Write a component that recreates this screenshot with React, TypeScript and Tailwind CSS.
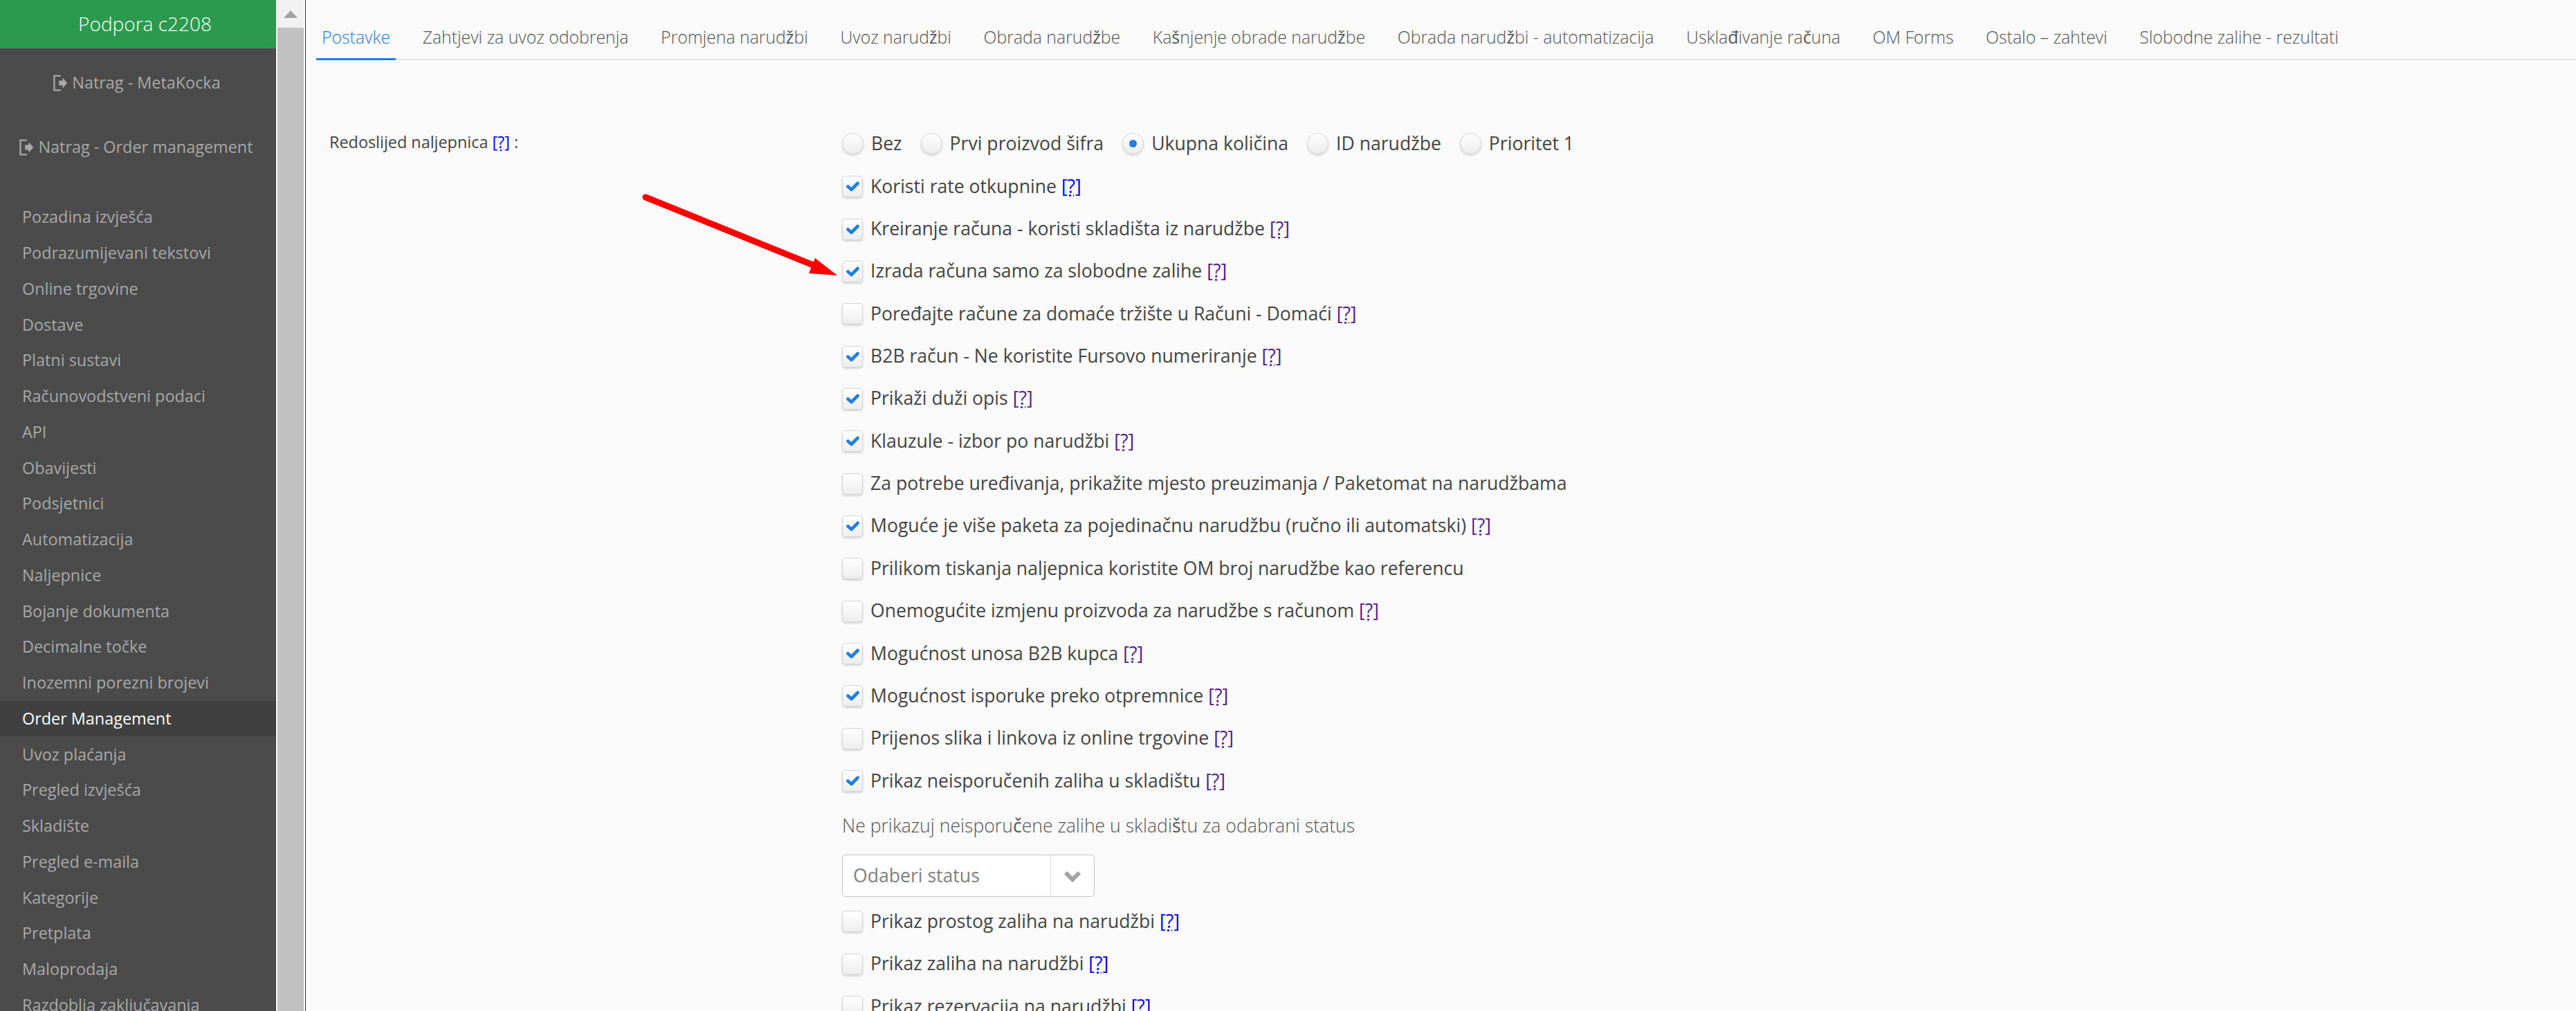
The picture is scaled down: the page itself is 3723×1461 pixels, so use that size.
import React from 'react';

const menu = [
  'Pozadina izvješća', 'Podrazumijevani tekstovi', 'Online trgovine', 'Dostave', 'Platni sustavi',
  'Računovodstveni podaci', 'API', 'Obavijesti', 'Podsjetnici', 'Automatizacija', 'Naljepnice',
  'Bojanje dokumenta', 'Decimalne točke', 'Inozemni porezni brojevi', 'Order Management', 'Uvoz plaćanja',
  'Pregled izvješća', 'Skladište', 'Pregled e-maila', 'Kategorije', 'Pretplata', 'Maloprodaja', 'Razdoblja zaključavanja',
];

const tabs = [
  'Postavke', 'Zahtjevi za uvoz odobrenja', 'Promjena narudžbi', 'Uvoz narudžbi', 'Obrada narudžbe',
  'Kašnjenje obrade narudžbe', 'Obrada narudžbi - automatizacija', 'Usklađivanje računa', 'OM Forms',
  'Ostalo – zahtevi', 'Slobodne zalihe - rezultati',
];

type Row = { label: string; checked: boolean; help?: 'blue' | 'purple' };

const rowsTop: Row[] = [
  { label: 'Koristi rate otkupnine', checked: true, help: 'blue' },
  { label: 'Kreiranje računa - koristi skladišta iz narudžbe', checked: true, help: 'purple' },
  { label: 'Izrada računa samo za slobodne zalihe', checked: true, help: 'purple' },
  { label: 'Poređajte račune za domaće tržište u Računi - Domaći', checked: false, help: 'purple' },
  { label: 'B2B račun - Ne koristite Fursovo numeriranje', checked: true, help: 'purple' },
  { label: 'Prikaži duži opis', checked: true, help: 'purple' },
  { label: 'Klauzule - izbor po narudžbi', checked: true, help: 'purple' },
  { label: 'Za potrebe uređivanja, prikažite mjesto preuzimanja / Paketomat na narudžbama', checked: false },
  { label: 'Moguće je više paketa za pojedinačnu narudžbu (ručno ili automatski)', checked: true, help: 'purple' },
  { label: 'Prilikom tiskanja naljepnica koristite OM broj narudžbe kao referencu', checked: false },
  { label: 'Onemogućite izmjenu proizvoda za narudžbe s računom', checked: false, help: 'purple' },
  { label: 'Mogućnost unosa B2B kupca', checked: true, help: 'purple' },
  { label: 'Mogućnost isporuke preko otpremnice', checked: true, help: 'purple' },
  { label: 'Prijenos slika i linkova iz online trgovine', checked: false, help: 'purple' },
  { label: 'Prikaz neisporučenih zaliha u skladištu', checked: true, help: 'purple' },
];

const rowsBottom: Row[] = [
  { label: 'Prikaz prostog zaliha na narudžbi', checked: false, help: 'blue' },
  { label: 'Prikaz zaliha na narudžbi', checked: false, help: 'blue' },
  { label: 'Prikaz rezervacija na narudžbi', checked: false, help: 'blue' },
];

const radios = ['Bez', 'Prvi proizvod šifra', 'Ukupna količina', 'ID narudžbe', 'Prioritet 1'];

// the light face has no č/š/ž/đ in the reference, those glyphs come out heavier
const LightText = ({ text }: { text: string }) => (
  <>
    {text.split(/([čšžđ])/).map((part, i) =>
      /^[čšžđ]$/.test(part) ? <span key={i} className="font-normal">{part}</span> : part
    )}
  </>
);

const Help = ({ color }: { color: 'blue' | 'purple' }) => (
  <span className={`ml-[7px] underline decoration-dotted ${color === 'blue' ? 'text-[#0000ee]' : 'text-[#551a8b]'}`}>[?]</span>
);

const CheckRow = ({ row }: { row: Row }) => (
  <div className="flex h-[61.35px] items-center">
    <span className="flex h-[31px] w-[30px] shrink-0 items-center justify-center rounded-[5px] border border-[#d4d4d4] bg-gradient-to-b from-white to-[#ededed] shadow-[0_2px_3px_rgba(0,0,0,0.15)]">
      {row.checked && (
        <svg viewBox="0 0 19 15" className="h-[15px] w-[19px]">
          <path d="M2.5 7.5 L7.5 12 L16.5 3" fill="none" stroke="#1e7fe0" strokeWidth="4.6" strokeLinecap="round" strokeLinejoin="round" />
        </svg>
      )}
    </span>
    <span className="ml-[11px] whitespace-nowrap">
      {row.label}
      {row.help && <Help color={row.help} />}
    </span>
  </div>
);

export default function App() {
  return (
    <div className="relative flex h-[1461px] w-[3723px] overflow-hidden bg-[#fafafa] font-['Open_Sans',sans-serif] text-[26.6px] text-[#444444]">
      <aside className="flex w-[399px] shrink-0 flex-col overflow-hidden bg-[#4b4b4b] text-[23.4px] text-[#a8a8a8]">
        <div className="flex h-[70px] shrink-0 items-center justify-center bg-[#2b9a4e] pb-[2px] pl-[20px] text-[28px] font-light text-white">Podpora c2208</div>
        <div className="mt-[15px] flex h-[70px] shrink-0 items-center justify-center gap-[6px] pr-[4px]">
          <ExitIcon />Natrag - MetaKocka
        </div>
        <div className="mt-[23px] flex h-[70px] shrink-0 items-center justify-center gap-[6px] pr-[6px]">
          <ExitIcon />Natrag - Order management
        </div>
        <nav className="mt-[40px] flex shrink-0 flex-col">
          {menu.map((m) => (
            <div
              key={m}
              className={`flex h-[51.75px] shrink-0 items-center whitespace-nowrap pl-[32px] ${m === 'Order Management' ? 'bg-[#404040] font-medium text-white' : ''}`}
            >
              {m}
            </div>
          ))}
        </nav>
      </aside>
      <div className="ml-[2px] flex w-[38px] shrink-0 flex-col bg-[#c1c1c1]">
        <div className="flex h-[40px] items-start justify-center bg-[#f1f1f1] pt-[15px]">
          <div className="h-0 w-0 border-x-[10px] border-b-[11px] border-x-transparent border-b-[#a3a3a3]" />
        </div>
      </div>
      <div className="ml-[2px] w-[1px] shrink-0 bg-[#333333]" />
      <main className="min-w-0 flex-1">
        <div className="ml-[15px] mt-[35px] flex h-[52px] items-start border-b-2 border-[#e2e2e2] text-[24.8px] font-light text-[#555555]">
          {tabs.map((t, i) => (
            <div
              key={t}
              className={`-mb-[2px] mr-[30.6px] h-[52px] whitespace-nowrap px-[8px] ${i === 0 ? 'border-b-[3px] border-[#1e7fe0] text-[#1e7fe0]' : ''}`}
            >
              <LightText text={t} />
            </div>
          ))}
        </div>
        <div className="mt-[89px] flex">
          <div className="ml-[34px] w-[741px] shrink-0 pt-[12px] text-[23.4px]">
            Redoslijed naljepnica <span className="text-[#0000ee] underline decoration-dotted">[?]</span> :
          </div>
          <div>
            <div className="flex h-[63px] items-center">
              {radios.map((r, i) => (
                <div key={r} className="mr-[27px] flex items-center">
                  <span className="flex h-[31px] w-[31px] items-center justify-center rounded-full border border-[#d4d4d4] bg-gradient-to-b from-white to-[#ededed] shadow-[0_2px_3px_rgba(0,0,0,0.15)]">
                    {i === 2 && <span className="h-[11px] w-[11px] rounded-full bg-[#1e7fe0]" />}
                  </span>
                  <span className="ml-[11px] whitespace-nowrap">{r}</span>
                </div>
              ))}
            </div>
            {rowsTop.map((row) => <CheckRow key={row.label} row={row} />)}
            <div className="mt-[15px] h-[61px] font-light text-[#555555]">
              <LightText text="Ne prikazuj neisporučene zalihe u skladištu za odabrani status" />
            </div>
            <div className="flex h-[61px] w-[365px] items-center rounded-[5px] border border-[#c4c4c4] bg-white pl-[15px] text-[#808080]">
              <span className="flex-1">Odaberi status</span>
              <span className="flex h-full w-[63px] items-center justify-center border-l border-[#dcdcdc]">
                <svg viewBox="0 0 26 18" className="h-[18px] w-[26px]">
                  <path d="M3 4 L13 14 L23 4" fill="none" stroke="#a3a3a3" strokeWidth="6" />
                </svg>
              </span>
            </div>
            <div className="mt-[5px]">
              {rowsBottom.map((row) => <CheckRow key={row.label} row={row} />)}
            </div>
          </div>
        </div>
      </main>
      <svg className="absolute left-0 top-0 h-[1461px] w-[3723px]" viewBox="0 0 3723 1461">
        <path d="M933 285 L1180 385" stroke="#ff0000" strokeWidth="9" strokeLinecap="round" />
        <path d="M1178 373 L1210 398 L1169 395 Z" fill="#ff0000" />
      </svg>
    </div>
  );
}

function ExitIcon() {
  return (
    <svg viewBox="0 0 24 28" className="h-[24px] w-[22px] shrink-0">
      <path d="M13 2 H2 V26 H13" fill="none" stroke="#a8a8a8" strokeWidth="2.6" />
      <path d="M10 10 H16 V5 L24 14 L16 23 V18 H10 Z" fill="#a8a8a8" />
    </svg>
  );
}
